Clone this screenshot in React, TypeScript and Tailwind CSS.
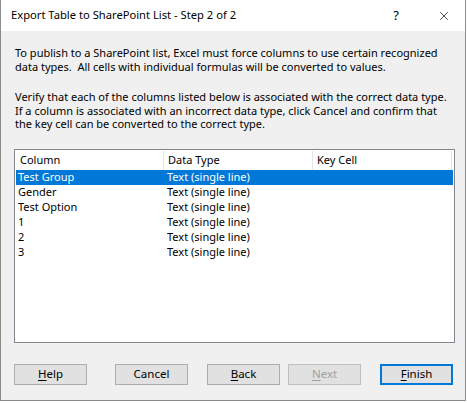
import { X } from "lucide-react";

const rows = ["Test Group", "Gender", "Test Option", "1", "2", "3"];

function Btn({ label, u, rest, disabled, primary }: { label?: string; u?: string; rest?: string; disabled?: boolean; primary?: boolean }) {
  return (
    <button
      className={`h-[21px] w-[73px] flex items-center justify-center bg-[#e1e1e1] text-[11.5px] ${primary ? "border-2 border-[#0078d7]" : "border border-[#adadad]"} ${disabled ? "text-[#a0a0a0] border-[#bfbfbf]" : "text-black"}`}
    >
      {label ? label : (<><span className="underline underline-offset-2">{u}</span>{rest}</>)}
    </button>
  );
}

export default function App() {
  return (
    <div className="w-[467px] h-[403px] bg-white" style={{ fontFamily: '"Noto Sans", "Open Sans", sans-serif' }}>
      <div className="w-[466px] h-[401px] flex flex-col border-l border-r border-b border-[#8c8c8c] bg-[#f0f0f0]">
        {/* title bar */}
        <div className="h-[31px] bg-white flex items-center pl-[10px] pr-[14px] text-[11.2px] text-black">
          <span className="flex-1">Export Table to SharePoint List - Step 2 of 2</span>
          <span className="mr-[38px] text-[13px]">?</span>
          <X className="h-[14px] w-[14px]" strokeWidth={1.2} />
        </div>

        <div className="px-[14px] pt-[15px] text-[11px] leading-[13.5px] text-black whitespace-nowrap">
          <p>To publish to a SharePoint list, Excel must force columns to use certain recognized<br />data types.&nbsp; All cells with individual formulas will be converted to values.</p>
          <p className="mt-[17px]">Verify that each of the columns listed below is associated with the correct data type.<br />If a column is associated with an incorrect data type, click Cancel and confirm that<br />the key cell can be converted to the correct type.</p>
        </div>

        {/* list view */}
        <div className="mx-[13px] mt-[18px] h-[194px] w-[441px] border border-[#828790] bg-white text-[11px] text-black whitespace-nowrap">
          <div className="flex h-[20px] items-center pt-[1px]">
            <div className="w-[149px] h-full pl-[5px] flex items-center border-r border-[#e5e5e5]">Column</div>
            <div className="w-[149px] h-full pl-[4px] flex items-center border-r border-[#e5e5e5]">Data Type</div>
            <div className="w-[139px] h-full pl-[4px] flex items-center border-r border-[#e5e5e5]">Key Cell</div>
          </div>
          {rows.map((r, i) => (
            <div key={r} className={`ml-[1px] w-[437px] h-[15px] flex items-center leading-[14px] ${i === 0 ? "bg-[#0078d7] text-white" : ""}`}>
              <div className="w-[149px] pl-[2px]">{r}</div>
              <div className="pl-[2px]">Text (single line)</div>
            </div>
          ))}
        </div>

        <div className="flex items-center pl-[13px] mt-[21px]">
          <Btn u="H" rest="elp" />
          <div className="ml-[28px]"><Btn label="Cancel" /></div>
          <div className="ml-[19px]"><Btn u="B" rest="ack" /></div>
          <div className="ml-[8px]"><Btn u="N" rest="ext" disabled /></div>
          <div className="ml-[19px]"><Btn u="F" rest="inish" primary /></div>
        </div>
      </div>
    </div>
  );
}
